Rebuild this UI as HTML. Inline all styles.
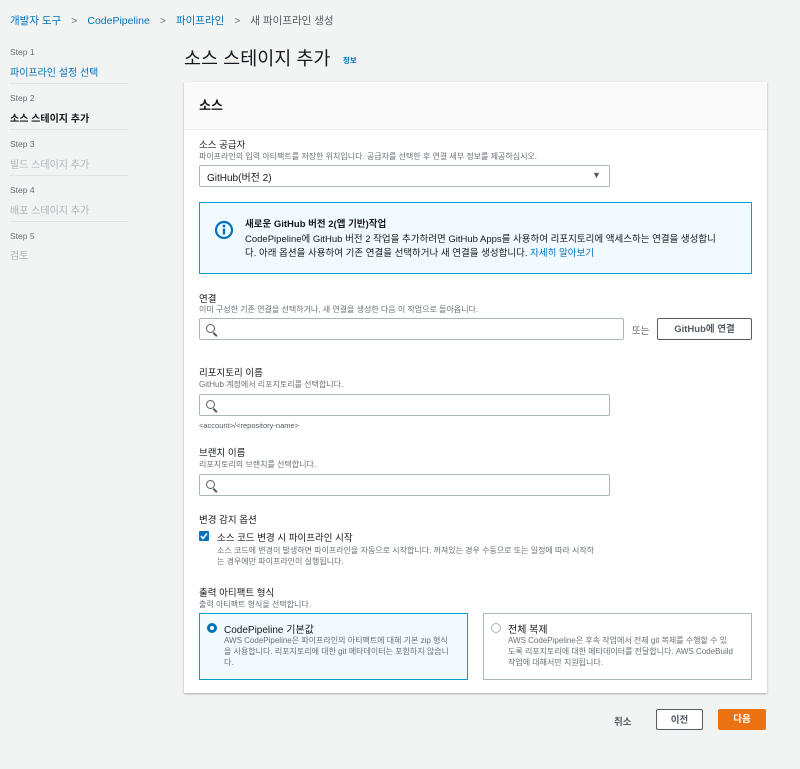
<!DOCTYPE html>
<html><head><meta charset="utf-8"><style>
*{box-sizing:border-box;margin:0;padding:0}
body{width:800px;height:769px;background:#f2f3f3;font-family:"Liberation Sans","Noto Sans CJK KR",sans-serif;color:#16191f;position:relative;overflow:hidden}
.a{position:absolute;white-space:nowrap}
.link{color:#0073bb}
.g{color:#687078}
.s{font-size:8px;color:#687078}
.l{font-size:9.5px;color:#16191f}
.hr{position:absolute;left:10px;width:118px;height:1px;background:#e1e4e5}
.inp{position:absolute;background:#fff;border:1px solid #aab7b8;border-radius:2px}
.mag{position:absolute;left:6px;top:5px;width:9px;height:9px;border:1.5px solid #545b64;border-radius:50%}
.mag:after{content:"";position:absolute;left:7px;top:7px;width:5px;height:1.5px;background:#545b64;transform:rotate(45deg);transform-origin:0 0}
.btn{position:absolute;border:1px solid #545b64;border-radius:2px;background:#fff;font-size:9.5px;font-weight:bold;text-align:center;color:#545b64}
</style></head><body>
<div class="a" style="left:10px;top:13px;font-size:10.5px"><span class="link">개발자 도구</span><span class="g" style="margin:0 10px">&gt;</span><span class="link">CodePipeline</span><span class="g" style="margin:0 10px">&gt;</span><span class="link">파이프라인</span><span class="g" style="margin:0 10px">&gt;</span><span style="color:#545b64">새 파이프라인 생성</span></div>

<div class="a g" style="left:10px;top:47px;font-size:8.5px">Step 1</div>
<div class="a link" style="left:10px;top:64px;font-size:10px">파이프라인 설정 선택</div>
<div class="hr" style="top:83px"></div>
<div class="a g" style="left:10px;top:93px;font-size:8.5px">Step 2</div>
<div class="a" style="left:10px;top:110px;font-size:10px;font-weight:bold">소스 스테이지 추가</div>
<div class="hr" style="top:129px"></div>
<div class="a g" style="left:10px;top:139px;font-size:8.5px">Step 3</div>
<div class="a" style="left:10px;top:156px;font-size:10px;color:#aab7b8">빌드 스테이지 추가</div>
<div class="hr" style="top:175px"></div>
<div class="a g" style="left:10px;top:185px;font-size:8.5px">Step 4</div>
<div class="a" style="left:10px;top:202px;font-size:10px;color:#aab7b8">배포 스테이지 추가</div>
<div class="hr" style="top:221px"></div>
<div class="a g" style="left:10px;top:231px;font-size:8.5px">Step 5</div>
<div class="a" style="left:10px;top:247px;font-size:10px;color:#aab7b8">검토</div>

<div class="a" style="left:184px;top:45px;font-size:18.5px">소스 스테이지 추가</div>
<div class="a link" style="left:343px;top:55px;font-size:7.5px;font-weight:bold">정보</div>

<div class="a" style="left:184px;top:82px;width:583px;height:611px;background:#fff;box-shadow:0 1px 2px rgba(0,0,0,.3)"></div>
<div class="a" style="left:184px;top:82px;width:583px;height:48px;background:#fafafa;border-bottom:1px solid #eaeded"></div>
<div class="a" style="left:199px;top:95px;font-size:13px;font-weight:bold">소스</div>

<div class="a l" style="left:199px;top:137px">소스 공급자</div>
<div class="a s" style="left:199px;top:151px">파이프라인의 입력 아티팩트를 저장한 위치입니다. 공급자를 선택한 후 연결 세부 정보를 제공하십시오.</div>
<div class="inp" style="left:199px;top:165px;width:411px;height:22px"></div>
<div class="a" style="left:207px;top:169px;font-size:10px">GitHub(버전 2)</div>
<div class="a" style="left:592px;top:170px;font-size:9px;color:#545b64">▼</div>

<div class="a" style="left:199px;top:202px;width:553px;height:72px;background:#f1faff;border:1px solid #00a1c9"></div>
<svg class="a" style="left:214px;top:220px" width="20" height="20" viewBox="0 0 20 20"><circle cx="10" cy="10" r="8" fill="none" stroke="#0073bb" stroke-width="2.2"/><circle cx="10" cy="6" r="1.4" fill="#0073bb"/><rect x="8.8" y="8.5" width="2.4" height="6" fill="#0073bb"/></svg>
<div class="a" style="left:245px;top:216px;font-size:9.5px;font-weight:bold">새로운 GitHub 버전 2(앱 기반)작업</div>
<div class="a" style="left:245px;top:231px;font-size:9.5px">CodePipeline에 GitHub 버전 2 작업을 추가하려면 GitHub Apps를 사용하여 리포지토리에 액세스하는 연결을 생성합니</div>
<div class="a" style="left:245px;top:245px;font-size:9.5px">다. 아래 옵션을 사용하여 기존 연결을 선택하거나 새 연결을 생성합니다. <span class="link">자세히 알아보기</span></div>

<div class="a l" style="left:199px;top:291px">연결</div>
<div class="a s" style="left:199px;top:304px">이미 구성한 기존 연결을 선택하거나, 새 연결을 생성한 다음 이 작업으로 돌아옵니다.</div>
<div class="inp" style="left:199px;top:318px;width:425px;height:22px"><div class="mag"></div></div>
<div class="a" style="left:632px;top:323px;font-size:9.5px;color:#545b64">또는</div>
<div class="btn" style="left:657px;top:318px;width:95px;height:22px;line-height:21px">GitHub에 연결</div>

<div class="a l" style="left:199px;top:365px">리포지토리 이름</div>
<div class="a s" style="left:199px;top:379px">GitHub 계정에서 리포지토리를 선택합니다.</div>
<div class="inp" style="left:199px;top:394px;width:411px;height:22px"><div class="mag"></div></div>
<div class="a s" style="left:199px;top:421px;font-size:7.5px;color:#545b64">&lt;account&gt;/&lt;repository-name&gt;</div>

<div class="a l" style="left:199px;top:445px">브랜치 이름</div>
<div class="a s" style="left:199px;top:459px">리포지토리의 브랜치를 선택합니다.</div>
<div class="inp" style="left:199px;top:474px;width:411px;height:22px"><div class="mag"></div></div>

<div class="a l" style="left:199px;top:512px">변경 감지 옵션</div>
<div class="a" style="left:199px;top:531px;width:10px;height:10px;background:#0073bb;border-radius:1px"></div>
<svg class="a" style="left:199px;top:531px" width="10" height="10"><path d="M2 5l2 2.5 4-5" stroke="#fff" stroke-width="1.6" fill="none"/></svg>
<div class="a" style="left:217px;top:530px;font-size:9.5px">소스 코드 변경 시 파이프라인 시작</div>
<div class="a s" style="left:217px;top:545px">소스 코드에 변경이 발생하면 파이프라인을 자동으로 시작합니다. 꺼져있는 경우 수동으로 또는 일정에 따라 시작하</div>
<div class="a s" style="left:217px;top:556px">는 경우에만 파이프라인이 실행됩니다.</div>

<div class="a l" style="left:199px;top:585px">출력 아티팩트 형식</div>
<div class="a s" style="left:199px;top:599px">출력 아티팩트 형식을 선택합니다.</div>
<div class="a" style="left:199px;top:613px;width:269px;height:67px;background:#f1faff;border:1px solid #00a1c9"></div>
<div class="a" style="left:207px;top:623px;width:10px;height:10px;border:3px solid #0073bb;border-radius:50%;background:#fff"></div>
<div class="a" style="left:224px;top:621px;font-size:10px">CodePipeline 기본값</div>
<div class="a s" style="left:224px;top:635px">AWS CodePipeline은 파이프라인의 아티팩트에 대해 기본 zip 형식</div>
<div class="a s" style="left:224px;top:646px">을 사용합니다. 리포지토리에 대한 git 메타데이터는 포함하지 않습니</div>
<div class="a s" style="left:224px;top:657px">다.</div>
<div class="a" style="left:483px;top:613px;width:269px;height:67px;background:#fff;border:1px solid #aab7b8"></div>
<div class="a" style="left:491px;top:623px;width:10px;height:10px;border:1px solid #aab7b8;border-radius:50%"></div>
<div class="a" style="left:508px;top:621px;font-size:10px">전체 복제</div>
<div class="a s" style="left:508px;top:635px">AWS CodePipeline은 후속 작업에서 전체 git 복제를 수행할 수 있</div>
<div class="a s" style="left:508px;top:646px">도록 리포지토리에 대한 메타데이터를 전달합니다. AWS CodeBuild</div>
<div class="a s" style="left:508px;top:657px">작업에 대해서만 지원됩니다.</div>

<div class="a" style="left:614px;top:714px;font-size:9.5px;font-weight:bold;color:#545b64">취소</div>
<div class="btn" style="left:656px;top:709px;width:47px;height:21px;line-height:21px">이전</div>
<div class="a" style="left:718px;top:709px;width:48px;height:21px;line-height:22px;background:#ec7211;color:#fff;font-size:9.5px;font-weight:bold;text-align:center;border-radius:2px">다음</div>
</body></html>
